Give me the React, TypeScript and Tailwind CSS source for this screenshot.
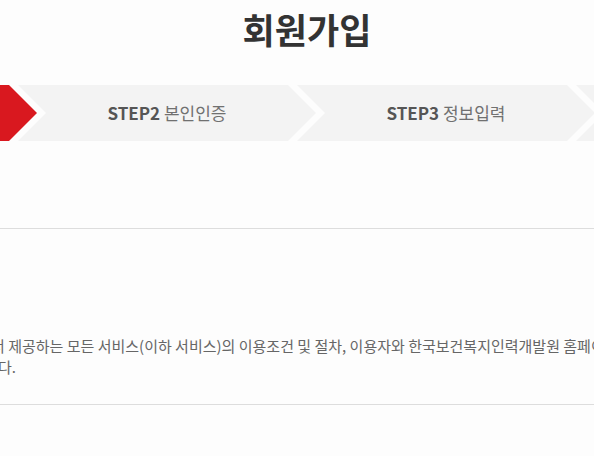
import React from "react";

const FONT = { fontFamily: '"Noto Sans CJK KR", "Noto Sans", sans-serif' };

const steps = [
  { no: "STEP1", label: "약관동의", active: true },
  { no: "STEP2", label: "본인인증", active: false },
  { no: "STEP3", label: "정보입력", active: false },
  { no: "STEP4", label: "가입완료", active: false },
];

const CLIP = "polygon(0 0, 270px 0, 298px 50%, 270px 100%, 0 100%, 28px 50%)";

export default function App() {
  return (
    <div className="w-[594px] h-[456px] overflow-hidden bg-[#fdfdfd]" style={FONT}>
      <h1 className="pt-[4px] h-[85px] text-center text-[35px] leading-[50px] font-bold text-[#333] pl-[20px]">
        회원가입
      </h1>
      <div className="flex h-[56px] -ml-[261px]">
        {steps.map((s, i) => (
          <div
            key={s.no}
            className={`shrink-0 w-[298px] h-[56px] flex items-center justify-center px-[28px] ${
              i > 0 ? "-ml-[19px]" : ""
            } ${s.active ? "bg-[#d9181f] text-white" : "bg-[#f3f3f3] text-[#707070]"}`}
            style={{ clipPath: CLIP }}
          >
            <span className="text-[17px] whitespace-nowrap">
              <span className={`font-bold ${s.active ? "" : "text-[#555]"}`}>{s.no}</span> {s.label}
            </span>
          </div>
        ))}
      </div>
      <div className="h-[87px]" />
      <div className="border-t border-[#dddddd]" />
      <div className="pt-[106px] h-[175px] text-[15px] leading-[21px] text-[#666]">
        <p className="whitespace-nowrap -ml-[9px]">
          서 제공하는 모든 서비스(이하 서비스)의 이용조건 및 절차, 이용자와 한국보건복지인력개발원 홈페이지의 권리, 의무, 책임사항
        </p>
        <p className="whitespace-nowrap -ml-[2px]">다.</p>
      </div>
      <div className="border-t border-[#dddddd]" />
    </div>
  );
}
